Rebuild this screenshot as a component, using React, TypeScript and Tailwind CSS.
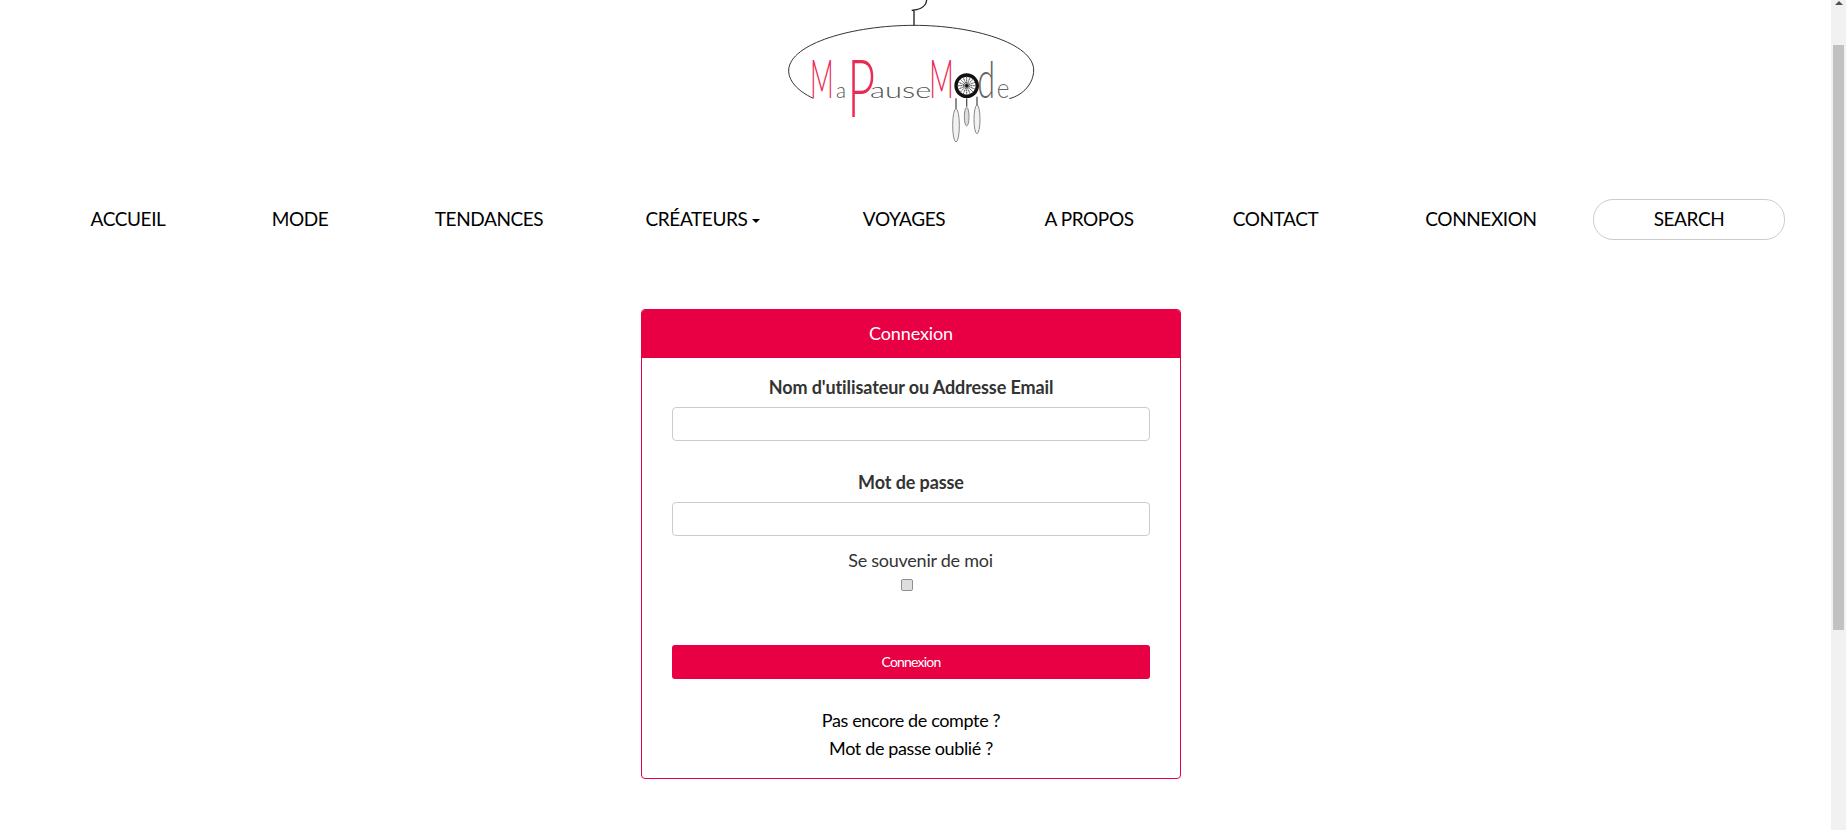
const navItems = [
  { label: "ACCUEIL", width: "w-[184px]" },
  { label: "MODE", width: "w-[160px]" },
  { label: "TENDANCES", width: "w-[218px]" },
  { label: "CRÉATEURS", width: "w-[210px]", caret: true },
  { label: "VOYAGES", width: "w-[192px]" },
  { label: "A PROPOS", width: "w-[178px]" },
  { label: "CONTACT", width: "w-[195px]" },
  { label: "CONNEXION", width: "w-[216px]" },
];

const spokes = Array.from({ length: 16 }, (_, i) => (i * Math.PI) / 8);

const Logo = () => (
  <svg viewBox="0 0 900 450" className="block h-[150px] w-[300px]" fill="none">
    {/* hanger */}
    <path
      d="M160 295 C110 272 85 240 86 210 C90 130 280 76 462 76 C640 76 820 130 821 210 C821 250 790 285 748 296"
      stroke="#333"
      strokeWidth="3"
    />
    <path d="M462 76 V32 M455 31 C470 30 498 24 500 0" stroke="#222" strokeWidth="4" />

    {/* lettering */}
    <g fontFamily="Lato, sans-serif" fontWeight="300">
      <text transform="translate(150 295) scale(1.45 3)" fontSize="54" fill="#ea2b55">M</text>
      <text transform="translate(262 352) scale(2.5 4.17)" fontSize="58" fill="#ea2b55">P</text>
      <text transform="translate(228 295) scale(1.15 1.15)" fontSize="54" fill="#555">a</text>
      <text transform="translate(330 295) scale(1.72 1.15)" fontSize="54" fill="#555">ause</text>
      <text transform="translate(508 295) scale(1.5 3)" fontSize="54" fill="#ea2b55">M</text>
      <text transform="translate(652 295) scale(1.8 2.8)" fontSize="54" fill="#666">d</text>
      <text transform="translate(710 295) scale(1.35 1.5)" fontSize="54" fill="#666">e</text>
    </g>

    {/* dreamcatcher */}
    <path d="M588 295 V330 M620 295 V320 M651 290 V316" stroke="#555" strokeWidth="4" />
    <ellipse cx="588" cy="376" rx="10" ry="50" fill="#f2f2f2" stroke="#888" strokeWidth="3" />
    <ellipse cx="620" cy="350" rx="7" ry="28" fill="#ddd" stroke="#888" strokeWidth="3" />
    <ellipse cx="651" cy="358" rx="9" ry="43" fill="#f2f2f2" stroke="#888" strokeWidth="3" />
    <circle cx="620" cy="257" r="32" fill="#fff" stroke="#111" strokeWidth="10" />
    {spokes.map((a) => (
      <line
        key={a}
        x1={620 + Math.cos(a) * 27}
        y1={257 + Math.sin(a) * 27}
        x2={620 - Math.cos(a) * 27}
        y2={257 - Math.sin(a) * 27}
        stroke="#333"
        strokeWidth="2"
        strokeDasharray="3 2"
      />
    ))}
    <circle cx="620" cy="257" r="4" fill="#111" />
  </svg>
);

const Nav = () => (
  <nav className="mt-[49px] ml-[36px] flex h-[41px] items-center text-[19px] tracking-[-0.4px] text-black">
    {navItems.map((item) => (
      <a key={item.label} className={`${item.width} mb-[1px] flex items-center justify-center`}>
        {item.label}
        {item.caret && (
          <span className="mt-[3px] ml-[5px] h-0 w-0 border-x-[4px] border-t-[4px] border-x-transparent border-t-black" />
        )}
      </a>
    ))}
    <div className="ml-[4px] flex h-[41px] w-[192px] items-center justify-center rounded-[20px] border border-[#ccc] pb-[1px]">
      SEARCH
    </div>
  </nav>
);

const TextInput = ({ label, type }: { label: string; type: string }) => (
  <div>
    <label className="block h-[24px] text-center text-[18px] leading-[24px] font-bold tracking-[-0.1px] text-[#333]">
      {label}
    </label>
    <input
      type={type}
      className="mt-[8px] block h-[34px] w-full rounded-[4px] border border-[#ccc] bg-white"
    />
  </div>
);

const LoginCard = () => (
  <div className="mt-[69px] ml-[641px] h-[470px] w-[540px] overflow-hidden rounded-[4px] border border-[#e90044]">
    <div className="flex h-[48px] items-center justify-center bg-[#e90044] pb-[1px] text-[18px] tracking-[-0.1px] text-white">
      Connexion
    </div>
    <div className="px-[30px] pt-[17px]">
      <TextInput label="Nom d'utilisateur ou Addresse Email" type="text" />
      <div className="mt-[29px]">
        <TextInput label="Mot de passe" type="password" />
      </div>
      <div className="mt-[12px] ml-[19px] h-[24px] text-center text-[18px] leading-[24px] tracking-[-0.26px] text-[#333]">
        Se souvenir de moi
      </div>
      <input
        type="checkbox"
        className="mt-[7px] ml-[229px] block h-[12px] w-[12px] appearance-none rounded-[2px] border border-[#8f8f8f] bg-[#dedede]"
      />
      <button className="mt-[54px] block h-[34px] w-full rounded-[3px] bg-[#e90044] pb-[2px] text-[14px] tracking-[-0.8px] text-white">
        Connexion
      </button>
      <div className="mt-[27px] text-center text-[18px] leading-[28px] tracking-[-0.37px] text-black">
        <a className="block">Pas encore de compte ?</a>
        <a className="block">Mot de passe oublié ?</a>
      </div>
    </div>
  </div>
);

const Scrollbar = () => (
  <div className="flex h-full w-[15px] shrink-0 flex-col items-center bg-[#f1f1f1]">
    <span className="mt-[1px] h-0 w-0 border-x-[4px] border-b-[4px] border-x-transparent border-b-[#505050]" />
    <div className="mt-[40px] h-[585px] w-[11px] bg-[#c1c1c1]" />
  </div>
);

export default function App() {
  return (
    <div className="flex h-screen overflow-hidden bg-white font-['Lato',sans-serif]">
      <main className="min-w-0 flex-1">
        <div className="ml-[760px] w-[300px]">
          <Logo />
        </div>
        <Nav />
        <LoginCard />
      </main>
      <Scrollbar />
    </div>
  );
}
